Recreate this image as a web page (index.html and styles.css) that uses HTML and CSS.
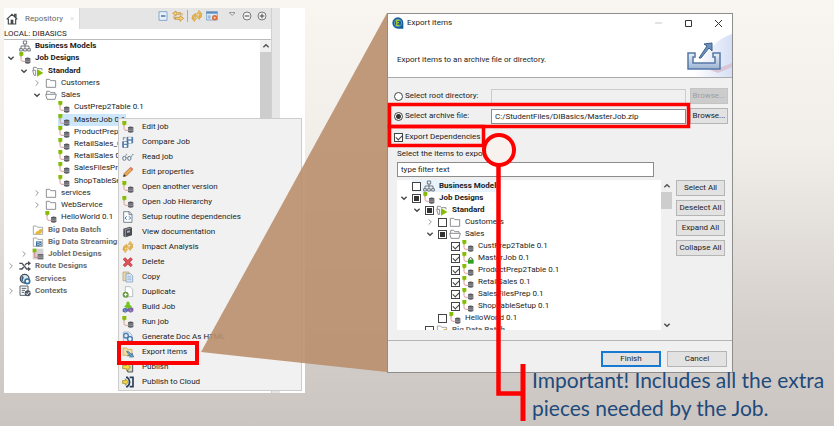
FILE: index.html
```html
<!DOCTYPE html>
<html lang="en">
<head>
<meta charset="utf-8">
<title>Export items</title>
<link rel="stylesheet" href="styles.css">
</head>
<body>
<svg class="sprite" aria-hidden="true">
  <symbol id="job" viewBox="0 0 36 36"><path d="M6 12v10q0 6 6 6h6" fill="none" stroke="#dc9a9a" stroke-width="3"/><path d="M1 0h12v11H9l-3 4-2-4H1z" fill="#86bc06"/><path d="M18 19q8-5 16 0v14q-8 4-16 0z" fill="#55565c"/><path d="M18 24h16M18 29h16" stroke="#b9bac0" stroke-width="2"/></symbol>
  <symbol id="joblock" viewBox="0 0 36 36"><path d="M6 12v10q0 6 6 6h6" fill="none" stroke="#dc9a9a" stroke-width="3"/><path d="M1 0h12v11H9l-3 4-2-4H1z" fill="#86bc06"/><path d="M21 24v-4q5-7 10 0v4" fill="none" stroke="#3d5b2c" stroke-width="3"/><path d="M18 23h17v12H18z" fill="#2fa321"/></symbol>
  <symbol id="biz" viewBox="0 0 36 36"><path d="M13 3h10v9H13zM18 12v12M6 26v-8h24v8M2 26h8v7H2zM14 26h8v7h-8zM26 26h8v7h-8z" fill="none" stroke="#5c6068" stroke-width="2.5"/></symbol>
  <symbol id="folder" viewBox="0 0 36 36"><path d="M4 7h10l3 4h15v20H4z" fill="#fff" stroke="#777b80" stroke-width="2.5"/></symbol>
  <symbol id="open" viewBox="0 0 36 36"><path d="M5 15V7h9l3 4h13v4M2 16h32l-4 15H6z" fill="#fff" stroke="#777b80" stroke-width="2.5"/></symbol>
  <symbol id="std" viewBox="0 0 36 36"><path d="M4 15V7h9l3 4h14v5M2 16h9v15H6z" fill="#fff" stroke="#777b80" stroke-width="2.5"/><path d="M15 12l19 12-19 11z" fill="#86bc06"/></symbol>
  <symbol id="batch" viewBox="0 0 36 36"><path d="M4 6h10l3 4h15v21H4z" fill="#fff" stroke="#999" stroke-width="2.5"/><path d="M10 30q0-9 9-9 2-7 13-7l-3 12q-7 8-19 4z" fill="#e9b93c"/></symbol>
  <symbol id="stream" viewBox="0 0 36 36"><path d="M4 6h10l3 4h15v21H4z" fill="#fff" stroke="#999" stroke-width="2.5"/><path d="M12 16h17v15H12z" fill="#3f719e"/><path d="M15 21q4-4 7 0t6 0M15 27q4-4 7 0t6 0" fill="none" stroke="#fff" stroke-width="2"/></symbol>
  <symbol id="joblet" viewBox="0 0 36 36"><path d="M2 2h32v32H2z" fill="#d2d0d2"/><path d="M8 12v16h10" fill="none" stroke="#d88" stroke-width="3"/><path d="M2 2h11v11H2z" fill="#86bc06"/><path d="M17 18h17v16H17z" fill="#66676d"/><path d="M17 24h17M17 29h17" stroke="#bbb" stroke-width="2"/></symbol>
  <symbol id="route" viewBox="0 0 36 36"><path d="M1 10h8l14 17h7M1 27h8l5-6M18 15l5-5h7" fill="none" stroke="#4b4e58" stroke-width="4"/><path d="M27 3l9 7-9 7zM27 20l9 7-9 7z" fill="#4b4e58"/></symbol>
  <symbol id="service" viewBox="0 0 36 36"><circle cx="17" cy="17" r="13" fill="#dce6ee" stroke="#45505f" stroke-width="4"/><path d="M8 8q9 3 5 9t3 11l-9-4z" fill="#45607c"/><circle cx="25" cy="25" r="7" fill="#fff" stroke="#2d6f9d" stroke-width="5"/></symbol>
  <symbol id="context" viewBox="0 0 36 36"><path d="M3 3h24v28H3zM8 10h14M8 16h10M8 22h7" fill="#fff" stroke="#596270" stroke-width="3"/><circle cx="26" cy="25" r="9" fill="#4b5664"/><path d="M21 25l4 4 6-8" fill="none" stroke="#fff" stroke-width="3"/></symbol>
  <symbol id="compare" viewBox="0 0 36 36"><path d="M15 4h17v17H15z" fill="#5b87b7" stroke="#315b8c" stroke-width="2"/><path d="M19 4h9v6h-9zM19 14h9v7h-9z" fill="#fff"/><path d="M2 17h16v17H2z" fill="#5b87b7" stroke="#315b8c" stroke-width="2"/><path d="M6 17h8v6H6zM6 27h8v7H6z" fill="#fff"/><path d="M4 12V5h7" fill="none" stroke="#315b8c" stroke-width="2"/></symbol>
  <symbol id="read" viewBox="0 0 36 36"><ellipse cx="7" cy="22" rx="5" ry="6" fill="none" stroke="#61788c" stroke-width="3"/><ellipse cx="22" cy="22" rx="5" ry="6" fill="none" stroke="#61788c" stroke-width="3"/><path d="M12 21q2-3 5 0M10 16l4-7 2 2M27 19l5-10 3 3" fill="none" stroke="#61788c" stroke-width="2"/></symbol>
  <symbol id="pencil" viewBox="0 0 36 36"><path d="M4 32l3-10L26 4l7 6-19 19z" fill="#eda652" stroke="#9d6a37" stroke-width="2"/><path d="M4 32l2-7 6 5z" fill="#333"/><path d="M25 5l7 6" stroke="#d9776b" stroke-width="4"/></symbol>
  <symbol id="routine" viewBox="0 0 36 36"><path d="M5 2h17l8 8v24H5zM21 2v9h9" fill="#f8fafb" stroke="#65717d" stroke-width="2.5"/><path d="M14 16l-5 5 5 5M21 16l5 5-5 5" fill="none" stroke="#3b79ae" stroke-width="3"/></symbol>
  <symbol id="book" viewBox="0 0 36 36"><path d="M4 8l20-6 6 3v23l-20 6-6-3z" fill="#474b52"/><path d="M8 11l19-5M10 34V12" stroke="#c4c6c9" stroke-width="2"/><path d="M15 15l9-2v6l-9 2z" fill="#aeb1b6"/></symbol>
  <symbol id="impact" viewBox="0 0 36 36"><path d="M7 26q-5-8 6-10M27 11q7 8-3 11" fill="none" stroke="#c28a2c" stroke-width="6"/><path d="M7 26q-5-8 6-10M27 11q7 8-3 11" fill="none" stroke="#efbd4f" stroke-width="4"/><path d="M12 9l8 7-8 7zM26 15l-9 7 9 7zM24 1l9 10H18zM10 35L2 25h15z" fill="#efbd4f" stroke="#bd872c" stroke-width="1"/></symbol>
  <symbol id="delete" viewBox="0 0 36 36"><path d="M6 7l23 23M29 7L6 30" stroke="#a92f36" stroke-width="9"/><path d="M6 7l23 23M29 7L6 30" stroke="#e2545b" stroke-width="6"/></symbol>
  <symbol id="copy" viewBox="0 0 36 36"><path d="M3 3h18v26H3z" fill="#e8d8ad" stroke="#b49a60" stroke-width="2"/><path d="M12 8h14l6 6v19H12z" fill="#dce9f5" stroke="#6f94bb" stroke-width="2"/><path d="M16 16h11M16 21h12M16 26h12" stroke="#83a5c8" stroke-width="2"/></symbol>
  <symbol id="dup" viewBox="0 0 36 36"><path d="M10 2h14l8 8v22H10z" fill="#fff" stroke="#9ba2a6" stroke-width="2"/><circle cx="11" cy="26" r="9" fill="#63993b"/><path d="M11 21v10M6 26h10" stroke="#fff" stroke-width="3"/></symbol>
  <symbol id="build" viewBox="0 0 36 36"><path d="M9 20l-7 4v8l8 3 8-4v-8z" fill="#566cae"/><path d="M26 18l-8 4v9l8 4 8-4v-9z" fill="#7d5fa1"/><path d="M18 1l-5 4v6l-7 5 8 6h10l6-6-7-5V5z" fill="#71c51e"/><path d="M6 26l4 2v4M23 26l4 2v4" fill="none" stroke="#bec7e7" stroke-width="2"/></symbol>
  <symbol id="gen" viewBox="0 0 36 36"><path d="M4 3h17l9 9v21H4z" fill="#dfeaf6" stroke="#8ba8c7" stroke-width="2"/><circle cx="12" cy="14" r="7" fill="none" stroke="#4d7eb1" stroke-width="4"/><circle cx="24" cy="24" r="7" fill="#fff" stroke="#3e73aa" stroke-width="4"/></symbol>
  <symbol id="export" viewBox="0 0 36 36"><path d="M3 6h11l3 4h13v18H3z" fill="#f5dfa0" stroke="#c69a47" stroke-width="2"/><path d="M14 15l6 2 10 10v-6l5 12H22l4-3-10-9z" fill="#6d9cc8" stroke="#416f9d" stroke-width="2"/><path d="M16 30l8-3" stroke="#4b8a50" stroke-width="4"/></symbol>
  <symbol id="publish" viewBox="0 0 36 36"><path d="M17 3h15v30H17z" fill="#d9d6b3" stroke="#55585e" stroke-width="3"/><path d="M2 13h12V6l11 12-11 12v-7H2z" fill="#f4db40" stroke="#8d7b20" stroke-width="2"/></symbol>
  <symbol id="cloud" viewBox="0 0 36 36"><path d="M12 4h4q14 14 0 28h-4M23 4h10v28H23" fill="none" stroke="#26405f" stroke-width="5"/><path d="M1 14h9V8l9 10-9 10v-6H1z" fill="#f4db40" stroke="#8d7b20" stroke-width="2"/></symbol>
  <symbol id="down" viewBox="0 0 24 24"><path d="M4 8l8 8 8-8" fill="none" stroke="#45484b" stroke-width="4"/></symbol>
  <symbol id="right" viewBox="0 0 24 24"><path d="M8 4l8 8-8 8" fill="none" stroke="#94979a" stroke-width="3"/></symbol>
  <symbol id="up" viewBox="0 0 24 24"><path d="M4 16l8-8 8 8" fill="none" stroke="#505356" stroke-width="4"/></symbol>
</svg>

<main class="slide">
  <section class="repo">
    <div class="view">
      <header class="tabs">
        <div class="tab">
          <svg class="icon" viewBox="0 0 36 36"><path d="M2 19L18 4l16 15M26 11V4h4v10M7 17v16h22V17" fill="none" stroke="#45484c" stroke-width="3.5"/><path d="M14 20h8v13h-8z" fill="#45484c"/></svg>
          <span>Repository</span><span class="tab-x">×</span>
        </div>
        <div class="tools">
          <svg class="icon" viewBox="0 0 36 36"><path d="M6 5h24v26H6z" fill="#e5f0fa" stroke="#86a8ca" stroke-width="3"/><path d="M12 18h13" stroke="#31669a" stroke-width="4"/></svg>
          <svg class="icon" viewBox="0 0 36 36"><path d="M12 3L2 10l10 8v-5h14V8H12zM24 17l11 8-11 9v-6H9v-6h15z" fill="#f6d27b" stroke="#bf852c" stroke-width="2"/><path d="M6 17v9h5M30 17V9" fill="none" stroke="#bf852c" stroke-width="2"/></svg>
          <i class="bar"></i>
          <svg class="icon"><use href="#impact"/></svg>
          <svg class="icon" viewBox="0 0 36 36"><path d="M1 5h33v25H1z" fill="#dce9f6" stroke="#5d8dc0" stroke-width="2"/><path d="M1 5h33v6H1z" fill="#5d8dc0"/><path d="M5 16h9v10H5z" fill="#9dbde0"/><circle cx="26" cy="23" r="8" fill="#dd6b38"/><circle cx="26" cy="23" r="3" fill="#fbd9c4"/></svg>
          <svg class="icon gap" viewBox="0 0 36 36"><path d="M10 8h17l-8.500 8z" fill="#fff" stroke="#606367" stroke-width="2"/></svg>
          <svg class="icon" viewBox="0 0 36 36"><circle cx="18" cy="18" r="12" fill="#f4f4f4" stroke="#606367" stroke-width="2.500"/><path d="M11 18h14" stroke="#45484b" stroke-width="3"/></svg>
          <svg class="icon" viewBox="0 0 36 36"><circle cx="18" cy="18" r="12" fill="#f4f4f4" stroke="#606367" stroke-width="2.500"/><path d="M11 18h14M18 11v14" stroke="#45484b" stroke-width="3"/></svg>
        </div>
      </header>
      <div class="project">LOCAL: DIBASICS</div>
      <div class="tree-area">
        <ul class="tree">
          <li class="b"><i class="chev"></i><svg class="icon"><use href="#biz"/></svg>Business Models</li>
          <li class="b"><svg class="chev"><use href="#down"/></svg><svg class="icon"><use href="#job"/></svg>Job Designs</li>
          <li class="b l1"><svg class="chev"><use href="#down"/></svg><svg class="icon"><use href="#std"/></svg>Standard</li>
          <li class="l2"><svg class="chev"><use href="#right"/></svg><svg class="icon"><use href="#folder"/></svg>Customers</li>
          <li class="l2"><svg class="chev"><use href="#down"/></svg><svg class="icon"><use href="#open"/></svg>Sales</li>
          <li class="l3"><i class="chev"></i><svg class="icon"><use href="#job"/></svg>CustPrep2Table 0.1</li>
          <li class="l3"><i class="chev"></i><span class="picked"><svg class="icon"><use href="#job"/></svg>MasterJob 0.1</span></li>
          <li class="l3"><i class="chev"></i><svg class="icon"><use href="#job"/></svg>ProductPrep</li>
          <li class="l3"><i class="chev"></i><svg class="icon"><use href="#job"/></svg>RetailSales_C</li>
          <li class="l3"><i class="chev"></i><svg class="icon"><use href="#job"/></svg>RetailSales 0.</li>
          <li class="l3"><i class="chev"></i><svg class="icon"><use href="#job"/></svg>SalesFilesPrep</li>
          <li class="l3"><i class="chev"></i><svg class="icon"><use href="#job"/></svg>ShopTableSe</li>
          <li class="l2"><svg class="chev"><use href="#right"/></svg><svg class="icon"><use href="#folder"/></svg>services</li>
          <li class="l2"><svg class="chev"><use href="#right"/></svg><svg class="icon"><use href="#folder"/></svg>WebService</li>
          <li class="l2"><i class="chev"></i><svg class="icon"><use href="#job"/></svg>HelloWorld 0.1</li>
          <li class="b l1 dim"><i class="chev"></i><svg class="icon"><use href="#batch"/></svg>Big Data Batch</li>
          <li class="b l1 dim"><i class="chev"></i><svg class="icon"><use href="#stream"/></svg>Big Data Streaming</li>
          <li class="b l1 dim"><svg class="chev"><use href="#right"/></svg><svg class="icon"><use href="#joblet"/></svg>Joblet Designs</li>
          <li class="b dim"><svg class="chev"><use href="#right"/></svg><svg class="icon"><use href="#route"/></svg>Route Designs</li>
          <li class="b dim"><i class="chev"></i><svg class="icon"><use href="#service"/></svg>Services</li>
          <li class="b dim"><svg class="chev"><use href="#right"/></svg><svg class="icon"><use href="#context"/></svg>Contexts</li>
        </ul>
        <div class="scroll"><svg class="arrow"><use href="#up"/></svg><i class="thumb"></i></div>
      </div>
    </div>
    <div class="gutter"></div>
    <div class="menu" role="menu">
      <button role="menuitem"><svg class="icon"><use href="#job"/></svg>Edit job</button>
      <button role="menuitem"><svg class="icon"><use href="#compare"/></svg>Compare Job</button>
      <button role="menuitem"><svg class="icon"><use href="#read"/></svg>Read job</button>
      <button role="menuitem"><svg class="icon"><use href="#pencil"/></svg>Edit properties</button>
      <button role="menuitem"><svg class="icon"><use href="#job"/></svg>Open another version</button>
      <button role="menuitem"><svg class="icon"><use href="#job"/></svg>Open Job Hierarchy</button>
      <button role="menuitem"><svg class="icon"><use href="#routine"/></svg>Setup routine dependencies</button>
      <button role="menuitem"><svg class="icon"><use href="#book"/></svg>View documentation</button>
      <button role="menuitem"><svg class="icon"><use href="#impact"/></svg>Impact Analysis</button>
      <button role="menuitem"><svg class="icon"><use href="#delete"/></svg>Delete</button>
      <button role="menuitem"><svg class="icon"><use href="#copy"/></svg>Copy</button>
      <button role="menuitem"><svg class="icon"><use href="#dup"/></svg>Duplicate</button>
      <button role="menuitem"><svg class="icon"><use href="#build"/></svg>Build Job</button>
      <button role="menuitem"><svg class="icon"><use href="#job"/></svg>Run job</button>
      <button role="menuitem"><svg class="icon"><use href="#gen"/></svg>Generate Doc As HTML</button>
      <button role="menuitem"><svg class="icon"><use href="#export"/></svg>Export items</button>
      <button role="menuitem"><svg class="icon"><use href="#publish"/></svg>Publish</button>
      <button role="menuitem"><svg class="icon"><use href="#cloud"/></svg>Publish to Cloud</button>
    </div>
  </section>

  <div class="side">
    <form class="dialog">
      <header class="head">
        <div class="title">
          <svg class="icon" viewBox="0 0 36 36"><path d="M18 1a17 17 0 1 0 0 34h16V18A17 17 0 0 0 18 1z" fill="#14609a"/><circle cx="18" cy="18" r="11" fill="none" stroke="#86b4cf" stroke-width="2"/><path d="M23 10h-9v15h9M14 17h7" fill="none" stroke="#a9c338" stroke-width="4"/></svg>
          <span>Export items</span>
          <svg class="wins" viewBox="0 0 70 10"><path d="M1 5h7" stroke="#c6c6c6"/><path d="M31.500 2.500h6v6h-6z" fill="none" stroke="#333"/><path d="M61 2l7 7M68 2l-7 7" stroke="#333"/></svg>
        </div>
        <p>Export items to an archive file or directory.</p>
        <svg class="banner" viewBox="0 0 46 44">
          <defs><linearGradient id="wash"><stop offset="0" stop-color="#fff"/><stop offset="1" stop-color="#d5dff5"/></linearGradient><linearGradient id="steel" x2="0" y2="1"><stop offset="0" stop-color="#e9f0f8"/><stop offset="1" stop-color="#9cb3d3"/></linearGradient></defs>
          <path d="M8 44Q22 8 46 1v43z" fill="url(#wash)"/>
          <path d="M24 37q10-2 22-7v4l-14 6z" fill="#d9c6d5"/>
          <path d="M2 20h7v4H7v6h22v-6h-2v-4h7v16H2z" fill="url(#steel)" stroke="#5577a5" stroke-width="1.500"/>
          <path d="M13 25l8-12-3-2 8-1v8l-3-3-8 10z" fill="#6e91bb" stroke="#3c5f8d"/>
        </svg>
      </header>
      <div class="body">
        <div class="row">
          <input type="radio" name="src" id="root"><label for="root">Select root directory:</label>
          <input type="text" class="off" aria-label="Root directory" disabled>
          <button type="button" disabled>Browse...</button>
        </div>
        <div class="row">
          <input type="radio" name="src" id="arch" checked><label for="arch">Select archive file:</label>
          <input type="text" aria-label="Archive file" value="C:/StudentFiles/DIBasics/MasterJob.zip">
          <button type="button">Browse...</button>
        </div>
        <div class="row deps"><input type="checkbox" id="deps" checked><label for="deps">Export Dependencies</label></div>
        <label class="caption" for="filter">Select the items to export:</label>
        <input type="text" id="filter" value="type filter text">
        <div class="pick">
          <ul class="tree checks">
            <li class="b hot"><i class="chev"></i><label><input type="checkbox"><svg class="icon"><use href="#biz"/></svg>Business Models</label></li>
            <li class="b"><svg class="chev"><use href="#down"/></svg><label><input type="checkbox" class="part"><svg class="icon"><use href="#job"/></svg>Job Designs</label></li>
            <li class="b l1"><svg class="chev"><use href="#down"/></svg><label><input type="checkbox" class="part"><svg class="icon"><use href="#std"/></svg>Standard</label></li>
            <li class="l2"><svg class="chev"><use href="#right"/></svg><label><input type="checkbox"><svg class="icon"><use href="#folder"/></svg>Customers</label></li>
            <li class="l2"><svg class="chev"><use href="#down"/></svg><label><input type="checkbox" class="part"><svg class="icon"><use href="#open"/></svg>Sales</label></li>
            <li class="l3"><i class="chev"></i><label><input type="checkbox" checked><svg class="icon"><use href="#job"/></svg>CustPrep2Table 0.1</label></li>
            <li class="l3"><i class="chev"></i><label><input type="checkbox" checked><svg class="icon"><use href="#joblock"/></svg>MasterJob 0.1</label></li>
            <li class="l3"><i class="chev"></i><label><input type="checkbox" checked><svg class="icon"><use href="#job"/></svg>ProductPrep2Table 0.1</label></li>
            <li class="l3"><i class="chev"></i><label><input type="checkbox" checked><svg class="icon"><use href="#job"/></svg>RetailSales 0.1</label></li>
            <li class="l3"><i class="chev"></i><label><input type="checkbox" checked><svg class="icon"><use href="#job"/></svg>SalesFilesPrep 0.1</label></li>
            <li class="l3"><i class="chev"></i><label><input type="checkbox" checked><svg class="icon"><use href="#job"/></svg>ShopTableSetup 0.1</label></li>
            <li class="l2"><i class="chev"></i><label><input type="checkbox"><svg class="icon"><use href="#job"/></svg>HelloWorld 0.1</label></li>
            <li class="b l1 dim"><i class="chev"></i><label><input type="checkbox"><svg class="icon"><use href="#batch"/></svg>Big Data Batch</label></li>
          </ul>
          <div class="scroll"><svg class="arrow"><use href="#up"/></svg><i class="thumb"></i><svg class="arrow last"><use href="#down"/></svg></div>
          <div class="actions">
            <button type="button">Select All</button>
            <button type="button">Deselect All</button>
            <button type="button">Expand All</button>
            <button type="button">Collapse All</button>
          </div>
        </div>
      </div>
      <footer class="foot"><button type="button" class="primary">Finish</button><button type="button">Cancel</button></footer>
    </form>
    <p class="note">Important! Includes all the extra<br>pieces needed by the Job.</p>
  </div>

  <svg class="marks" viewBox="0 0 834 426" preserveAspectRatio="none" aria-hidden="true">
    <path d="M201 352L387 13v359z" fill="#b98f6d" fill-opacity=".9"/>
    <g fill="none" stroke="#fe0000">
      <path d="M119 343h78v20h-78z" stroke-width="4"/>
      <path d="M389.500 104.500h299v22h-299z" stroke-width="3.500"/>
      <path d="M389.500 126.500h94v19h-94z" stroke-width="3.500"/>
      <path d="M498.500 164v229.500H523" stroke-width="4.500"/>
      <path d="M523 364v57" stroke-width="5"/>
      <circle cx="499" cy="150" r="15" fill="#f7f2ee" stroke-width="4"/>
    </g>
  </svg>
</main>
</body>
</html>
```
FILE: styles.css
```css
* { box-sizing: border-box; }

body {
  margin: 0;
  font: 8px/12px Roboto, "Open Sans", sans-serif;
  color: #1c1c1c;
}

ul, p { margin: 0; padding: 0; list-style: none; }

button, input { font: inherit; color: inherit; margin: 0; }

.sprite { position: absolute; width: 0; height: 0; }

.icon { width: 12px; height: 12px; flex: none; }
.chev { width: 8px; height: 8px; flex: none; }

.slide {
  position: relative;
  display: flex;
  gap: 82px;
  min-height: 100vh;
  padding: 8px 0 0 4px;
  background: linear-gradient(#f9f5f0, #f1ede9 35%, #d5d0cc 75%, #cac5c1);
}

/* Repository view */
.repo {
  position: relative;
  display: flex;
  flex: 0 0 301px;
  align-self: flex-start;
  min-height: 385px;
  background: #fff;
}

.view { flex: 0 0 267px; }

.gutter {
  width: 9px;
  background: #e6e6e6;
  border-left: 1px solid #d0d0d0;
}

.tabs { display: flex; height: 21px; background: #e5e5e5; }

.tab {
  display: flex;
  align-items: center;
  width: 76px;
  padding-left: 2px;
  gap: 7px;
  background: #fff;
  color: #666;
  border-right: 1px solid #d8d8d8;
}

.tab-x { color: #ddd; }

.tools {
  display: flex;
  flex: 1;
  align-items: center;
  justify-content: flex-end;
  gap: 3px;
  padding: 0 3px 6px 0;
}

.tools .gap { margin-left: 5px; }
.tools .bar { width: 1px; height: 12px; background: #aaa; }

.project { height: 11px; line-height: 10px; border-bottom: 1px solid #bbb; }

.tree-area { display: flex; justify-content: space-between; }

.tree { display: grid; grid-auto-rows: 1fr; height: 257px; }

.tree li {
  display: flex;
  align-items: center;
  gap: 4px;
  padding-left: 3px;
  white-space: nowrap;
}

.tree li.l1 { padding-left: 16px; }
.tree li.l2 { padding-left: 29px; }
.tree li.l3 { padding-left: 42px; }
.b { font-weight: 700; }
.dim { color: #6c6c6c; }

.picked {
  display: flex;
  align-items: center;
  gap: 4px;
  background: #cce6fb;
}

.scroll {
  display: flex;
  flex-direction: column;
  align-items: center;
  width: 11px;
  background: #f0f0f0;
}

.arrow { width: 8px; height: 12px; flex: none; }
.thumb { width: 100%; height: 86px; background: #cdcdcd; }

.menu {
  position: absolute;
  top: 110px;
  left: 114px;
  width: 184px;
  padding-bottom: 1px;
  background: #f1f1f1;
  border: 1px solid #ccc;
}

.menu button {
  display: flex;
  align-items: center;
  gap: 8px;
  width: 100%;
  height: 15px;
  padding: 0 0 0 3px;
  background: none;
  border: 0;
}

/* Export dialog */
.side { flex: 1; padding-top: 5px; }

.dialog {
  width: 346px;
  background: #f0f0f0;
  border: 1px solid #8d8d8d;
}

.head {
  position: relative;
  height: 64px;
  background: #fff;
  border-bottom: 1px solid #aaa;
}

.title {
  display: flex;
  align-items: center;
  gap: 3px;
  height: 18px;
  padding-left: 4px;
}

.wins { width: 70px; height: 10px; margin-left: auto; margin-right: 8px; }
.head p { padding: 22px 0 0 9px; }
.banner { position: absolute; right: 0; bottom: 0; width: 46px; height: 44px; }

.body { padding: 8px 4px 0 6px; }

.row { display: flex; align-items: center; height: 20px; }
.row label { width: 88px; padding-left: 2px; }
.row input[type="text"] { flex: 1; height: 15px; margin-right: 4px; }
.deps { height: 22px; }
.row.deps label { width: auto; }

input[type="text"] {
  min-width: 0;
  padding: 0 3px;
  background: #fff;
  border: 1px solid #8c8c8c;
}

input.off { background: #f0f0f0; border-color: #ccc; }

input[type="radio"], input[type="checkbox"] {
  appearance: none;
  flex: none;
  width: 9px;
  height: 9px;
  background: #fff;
  border: 1px solid #444;
}

input[type="radio"] { border-radius: 50%; }

input[type="radio"]:checked { background: radial-gradient(#333 0 2px, #fff 3px); }

input.part { background: #333; box-shadow: inset 0 0 0 1px #fff; }

input[type="checkbox"]:checked::before {
  content: "";
  display: block;
  width: 5px;
  height: 3px;
  margin: 1px;
  border: solid #444;
  border-width: 0 0 1px 1px;
  transform: rotate(-45deg);
}

.dialog button {
  height: 16px;
  padding: 0;
  line-height: 12px;
  background: #e2e2e2;
  border: 1px solid #b5b5b5;
}

.row button { width: 38px; }
.dialog button:disabled { color: #a0a0a0; background: #ccc; border-color: #c4c4c4; }

.caption { display: block; padding-left: 3px; }
#filter { display: block; width: 257px; height: 15px; margin: 2px 0 3px 3px; }

.pick { display: flex; padding: 0 3px; height: 151px; }

.checks {
  display: block;
  flex: 1;
  height: 150px;
  overflow: hidden;
  background: #fff;
}

.checks li { height: 12px; }
.checks label { display: flex; align-items: center; gap: 4px; }
.checks input { margin-right: -2px; }
.hot label { background: #e8f3fc; }
.pick .thumb { height: 17px; }
.last { margin-top: auto; }

.actions {
  display: flex;
  flex-direction: column;
  gap: 4px;
  width: 53px;
  padding: 0 0 0 4px;
}

.foot {
  display: flex;
  justify-content: flex-end;
  gap: 6px;
  margin-top: 9px;
  padding: 10px 5px 5px;
  border-top: 1px solid #b5b5b5;
}

.foot button { width: 60px; }
.dialog .primary { border: 2px solid #1679d2; line-height: 10px; }

/* Callout */
.note {
  margin: -7px 0 0 145px;
  font: 21px/28px Lato, sans-serif;
  color: #1f4a7c;
}

.marks {
  position: absolute;
  inset: 0;
  width: 100%;
  height: 100%;
  pointer-events: none;
}
```
